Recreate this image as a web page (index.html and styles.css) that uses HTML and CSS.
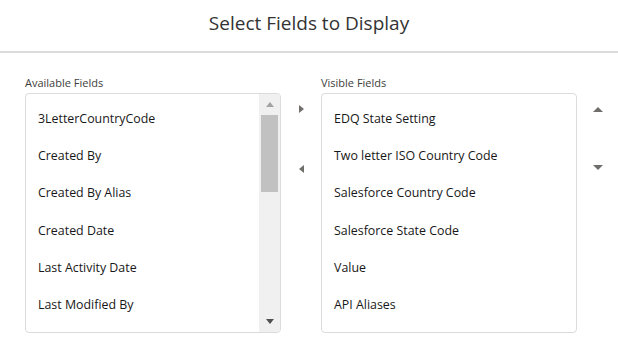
FILE: index.html
```html
<!DOCTYPE html>
<html lang="en">
<head>
<meta charset="utf-8">
<title>Select Fields to Display</title>
<link rel="stylesheet" href="styles.css">
</head>
<body>
<div class="modal">
  <header class="modal-header">
    <h2 class="modal-title">Select Fields to Display</h2>
  </header>
  <section class="dueling">
    <div class="col">
      <div class="col-label">Available Fields</div>
      <div class="listbox">
        <ul class="options">
          <li>3LetterCountryCode</li>
          <li>Created By</li>
          <li>Created By Alias</li>
          <li>Created Date</li>
          <li>Last Activity Date</li>
          <li>Last Modified By</li>
        </ul>
        <div class="scrollbar">
          <span class="sb-btn"><span class="tri tri-up tri-light"></span></span>
          <span class="sb-thumb"></span>
          <span class="sb-track"></span>
          <span class="sb-btn"><span class="tri tri-down"></span></span>
        </div>
      </div>
    </div>
    <div class="move-btns">
      <span class="icon-btn"><span class="tri tri-right"></span></span>
      <span class="icon-btn"><span class="tri tri-left"></span></span>
    </div>
    <div class="col">
      <div class="col-label">Visible Fields</div>
      <div class="listbox">
        <ul class="options">
          <li>EDQ State Setting</li>
          <li>Two letter ISO Country Code</li>
          <li>Salesforce Country Code</li>
          <li>Salesforce State Code</li>
          <li>Value</li>
          <li>API Aliases</li>
        </ul>
      </div>
    </div>
    <div class="order-btns">
      <span class="icon-btn"><span class="tri tri-up"></span></span>
      <span class="icon-btn"><span class="tri tri-down"></span></span>
    </div>
  </section>
</div>
</body>
</html>
```
FILE: styles.css
```css
html, body {
  margin: 0;
  padding: 0;
  background: #fff;
}
body {
  font-family: "Open Sans", "Noto Sans", "Liberation Sans", sans-serif;
  color: #181818;
}
.modal {
  width: 618px;
  height: 342px;
  overflow: hidden;
}
.modal-header {
  box-sizing: border-box;
  height: 53px;
  border-bottom: 2px solid #dddbda;
  display: flex;
  align-items: center;
  justify-content: center;
}
.modal-title {
  margin: 0;
  font-size: 19px;
  font-weight: 400;
  color: #333333;
  padding-bottom: 5px;
}
.dueling {
  display: flex;
  align-items: flex-start;
  padding: 23px 0 0 25px;
}
.col {
  display: flex;
  flex-direction: column;
}
.col-label {
  font-size: 11px;
  color: #3e3e3c;
  height: 17px;
  line-height: 14px;
}
.listbox {
  width: 256px;
  height: 240px;
  box-sizing: border-box;
  border: 1px solid #dddbda;
  border-radius: 4px;
  display: flex;
  overflow: hidden;
}
.options {
  list-style: none;
  margin: 0;
  padding: 6px 0 0 12px;
  flex: 1;
  font-size: 12.4px;
}
.options li {
  height: 37.2px;
  line-height: 37px;
  white-space: nowrap;
}
.scrollbar {
  width: 21px;
  background: #f0f0f0;
  display: flex;
  flex-direction: column;
  align-items: center;
}
.sb-btn {
  height: 21px;
  width: 21px;
  display: flex;
  align-items: center;
  justify-content: center;
}
.sb-thumb {
  width: 17px;
  height: 77px;
  background: #c1c1c1;
}
.sb-track {
  flex: 1;
}
.tri {
  width: 0;
  height: 0;
  display: block;
}
.tri-up {
  border-left: 5px solid transparent;
  border-right: 5px solid transparent;
  border-bottom: 5px solid #505050;
}
.tri-down {
  border-left: 5px solid transparent;
  border-right: 5px solid transparent;
  border-top: 5px solid #505050;
}
.tri-light {
  border-bottom-color: #a3a3a3;
}
.sb-btn .tri-up, .sb-btn .tri-down {
  border-left-width: 4.5px;
  border-right-width: 4.5px;
}
.tri-right {
  border-top: 4.5px solid transparent;
  border-bottom: 4.5px solid transparent;
  border-left: 5px solid #706e6b;
}
.tri-left {
  border-top: 4.5px solid transparent;
  border-bottom: 4.5px solid transparent;
  border-right: 5px solid #706e6b;
}
.move-btns {
  width: 40px;
  display: flex;
  flex-direction: column;
  align-items: center;
  padding-top: 28px;
  gap: 51px;
}
.move-btns .icon-btn {
  width: 9px;
  height: 9px;
  display: flex;
  align-items: center;
  justify-content: center;
}
.order-btns {
  width: 41px;
  display: flex;
  flex-direction: column;
  align-items: center;
  padding-top: 31px;
  gap: 53px;
}
.order-btns .icon-btn {
  width: 10px;
  height: 5px;
  display: flex;
  align-items: center;
  justify-content: center;
}
.order-btns .tri-up { border-bottom-color: #706e6b; }
.order-btns .tri-down { border-top-color: #706e6b; }
```
